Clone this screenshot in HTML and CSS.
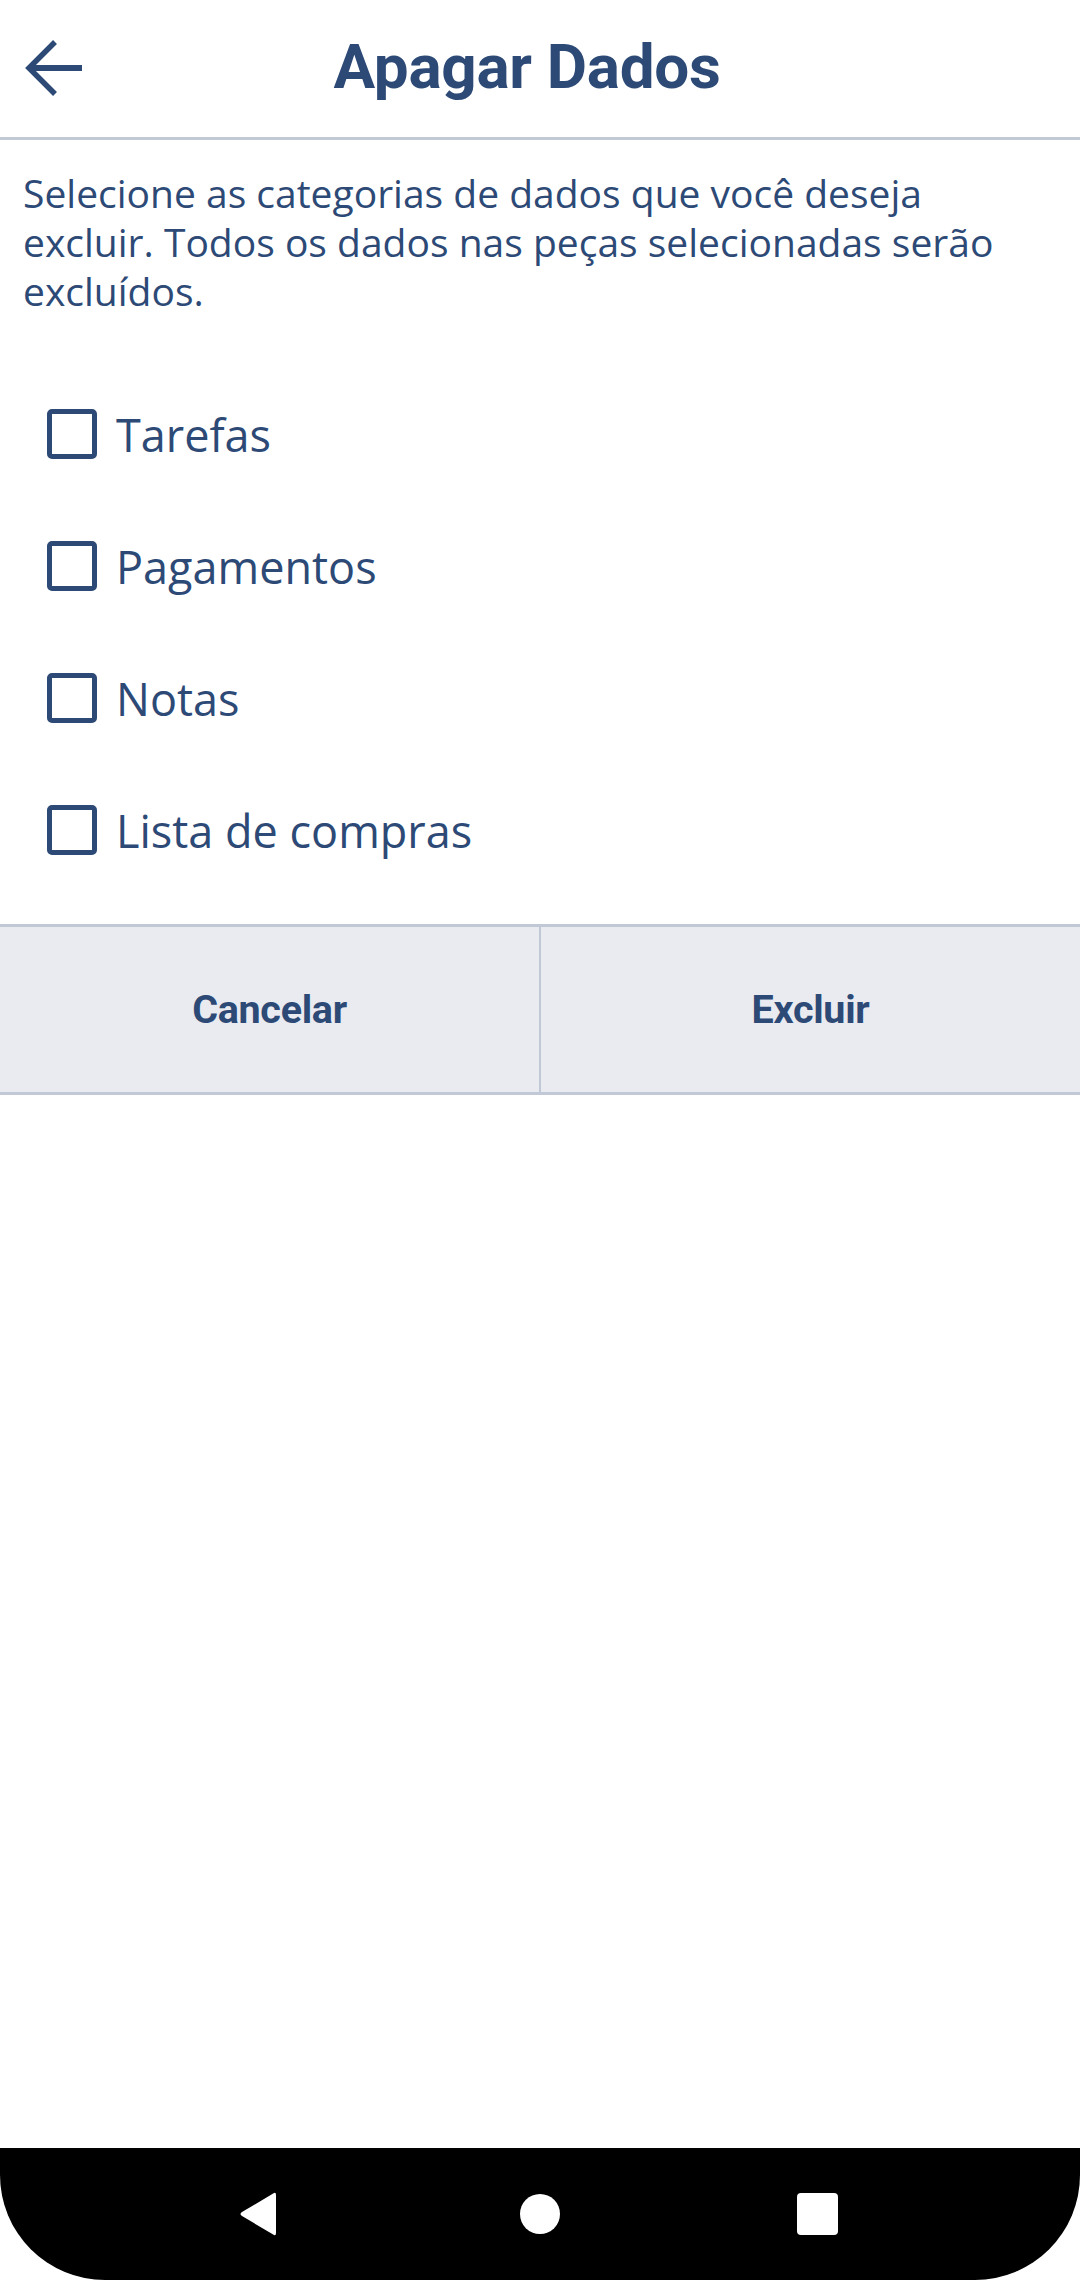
FILE: index.html
```html
<!DOCTYPE html>
<html lang="pt">
<head>
<meta charset="utf-8">
<title>Apagar Dados</title>
<link rel="stylesheet" href="styles.css">
</head>
<body>
<div class="screen">
  <header class="topbar">
    <div class="back">
      <svg width="60" height="60" viewBox="0 0 60 60">
        <path d="M57 30 H6" stroke="#2d4a77" stroke-width="6" fill="none"/>
        <path d="M30 4 L4 30 L30 56" stroke="#2d4a77" stroke-width="5.5" fill="none" stroke-linejoin="miter"/>
      </svg>
    </div>
    <h1 class="title">Apagar Dados</h1>
  </header>

  <main class="content">
    <p class="intro">Selecione as categorias de dados que você deseja excluir. Todos os dados nas peças selecionadas serão excluídos.</p>
    <ul class="options">
      <li class="option"><span class="box"></span><span class="label">Tarefas</span></li>
      <li class="option"><span class="box"></span><span class="label">Pagamentos</span></li>
      <li class="option"><span class="box"></span><span class="label">Notas</span></li>
      <li class="option"><span class="box"></span><span class="label">Lista de compras</span></li>
    </ul>
    <div class="actions">
      <button class="action">Cancelar</button>
      <button class="action">Excluir</button>
    </div>
  </main>

  <div class="spacer"></div>

  <nav class="navbar">
    <svg class="nav-back" width="40" height="46" viewBox="0 0 40 46">
      <path d="M36 2 L4 21 Q1 23 4 25 L36 44 Q38 45 38 42 V4 Q38 1 36 2 Z" fill="#fff"/>
    </svg>
    <span class="nav-home"></span>
    <span class="nav-recent"></span>
  </nav>
</div>
</body>
</html>
```

FILE: styles.css
```css
* {
  box-sizing: border-box;
}

html, body {
  margin: 0;
  padding: 0;
  background: #ffffff;
}

.screen {
  width: 1080px;
  height: 2280px;
  display: flex;
  flex-direction: column;
  color: #2d4a77;
  font-family: "Open Sans", "Noto Sans", sans-serif;
}

.topbar {
  height: 140px;
  display: flex;
  align-items: center;
  border-bottom: 3px solid #c1c9d6;
}

.back {
  width: 110px;
  height: 100%;
  display: flex;
  align-items: center;
  padding-left: 25px;
  padding-bottom: 2px;
}

.title {
  flex: 1;
  margin: 0 136px 0 0;
  text-align: center;
  font-family: Roboto, "Open Sans", sans-serif;
  font-weight: 700;
  font-size: 62px;
  line-height: 1;
  padding-bottom: 4px;
  letter-spacing: -0.3px;
}

.content {
  display: flex;
  flex-direction: column;
}

.intro {
  margin: 0;
  padding: 28px 23px 0 23px;
  font-size: 39px;
  line-height: 49px;
}

.options {
  list-style: none;
  margin: 0;
  padding: 53px 0 28px 0;
}

.option {
  height: 132px;
  display: flex;
  align-items: center;
  padding-left: 47px;
}

.box {
  width: 50px;
  height: 50px;
  border: 5.5px solid #2d4a77;
  border-radius: 5px;
  flex: none;
}

.label {
  margin-left: 19px;
  font-size: 45px;
  line-height: 1;
  padding-top: 1px;
  font-weight: 500;
}

.actions {
  display: grid;
  grid-template-columns: 539px 1fr;
  border-top: 3px solid #c1c9d6;
  border-bottom: 3px solid #c1c9d6;
  background: #e9ebf1;
}

.action {
  height: 165px;
  border: none;
  background: transparent;
  color: #2d4a77;
  font-family: Roboto, "Open Sans", sans-serif;
  font-weight: 700;
  font-size: 39.5px;
  letter-spacing: -0.3px;
  padding: 0;
}

.action + .action {
  border-left: 2px solid #c1c9d6;
}

.spacer {
  flex: 1;
}

.navbar {
  height: 132px;
  background: #000;
  border-radius: 0 0 105px 105px;
  position: relative;
  flex: none;
}

.nav-back {
  position: absolute;
  left: 238px;
  top: 43px;
}

.nav-home {
  position: absolute;
  left: 520px;
  top: 46px;
  width: 40px;
  height: 40px;
  border-radius: 50%;
  background: #fff;
}

.nav-recent {
  position: absolute;
  left: 797px;
  top: 45px;
  width: 41px;
  height: 42px;
  border-radius: 4px;
  background: #fff;
}
```
